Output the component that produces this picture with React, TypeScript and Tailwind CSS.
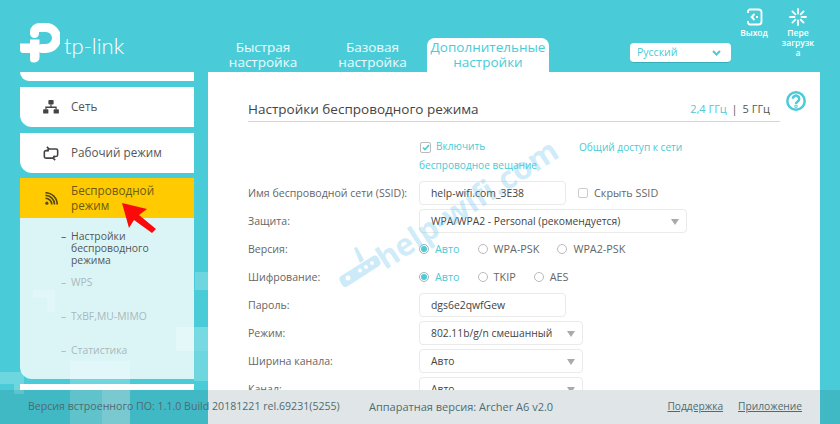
import React from 'react';

const font = { fontFamily: '"Open Sans", "Liberation Sans", sans-serif' };

function Logo() {
  return (
    <div className="flex items-center">
      <svg width="40" height="40" viewBox="0 0 40 40" fill="none">
        <path d="M0 20.5h10v-4h9.5v18a5 5 0 0 1-5 5h-1a3.500 3.500 0 0 1-3.500-3.500V30H3.500A3.500 3.500 0 0 1 0 26.500z" fill="#fff" />
        <path d="M14.500 10.500V9a4.500 4.500 0 0 1 4.500-4.500h7a10.500 10.500 0 0 1 0 21h-4" stroke="#fff" strokeWidth="9" strokeLinecap="round" />
      </svg>
      <span className="ml-[4px] mt-[6px] text-[22px] leading-none font-light text-white" style={{ fontFamily: '"Lato", sans-serif' }}>tp-link</span>
    </div>
  );
}

function ExitIcon() {
  return (
    <svg width="18" height="18" viewBox="0 0 18 18" fill="none" stroke="#fff" strokeWidth="1.800">
      <path d="M3 5V3.500A2 2 0 0 1 5 1.500h8.500a3 3 0 0 1 3 3v9a3 3 0 0 1-3 3H5a2 2 0 0 1-2-2V13" />
      <path d="M9.500 6 6.500 9l3 3M6.500 9h2M11 9h2" />
    </svg>
  );
}

function RebootIcon() {
  return (
    <svg width="18" height="18" viewBox="0 0 18 18" fill="none" stroke="#fff" strokeWidth="1.800" strokeLinecap="round">
      <path d="M9 1v4.500M9 12.500V17M1 9h4.500M12.500 9H17M3.400 3.400l3 3M11.600 11.600l3 3M14.600 3.400l-3 3M6.400 11.600l-3 3" />
    </svg>
  );
}

function NetworkIcon() {
  return (
    <svg width="16" height="14" viewBox="0 0 18 16" fill="#444">
      <rect x="6" y="0" width="6" height="5" rx="1" />
      <rect x="0" y="10.500" width="6" height="5" rx="1" />
      <rect x="12" y="10.500" width="6" height="5" rx="1" />
      <path d="M8.300 5h1.400v2.500H15.500V10.500h-1.400V9H3.900v1.500H2.500V7.500H8.300z" />
    </svg>
  );
}

function ModeIcon() {
  return (
    <svg width="16" height="15" viewBox="0 0 18 18" fill="none" stroke="#444" strokeWidth="1.900">
      <path d="M6 3.500h9a2 2 0 0 1 2 2v5a2 2 0 0 1-2 2h-3.500" />
      <path d="M12 14.500H3a2 2 0 0 1-2-2v-5a2 2 0 0 1 2-2h3.500" />
      <path d="m4 1 2.500 2.500L4 6M14 12l-2.500 2.500L14 17" strokeLinejoin="round" />
    </svg>
  );
}

function WifiIcon() {
  return (
    <svg width="13" height="13" viewBox="0 0 14 14" fill="none" stroke="#5a4a10" strokeWidth="1.800">
      <circle cx="2" cy="12" r="1.700" fill="#5a4a10" stroke="none" />
      <path d="M0.500 6.700a6.800 6.800 0 0 1 6.800 6.800" />
      <path d="M0.500 3.700a9.800 9.800 0 0 1 9.800 9.800" />
      <path d="M0.500 0.800a12.700 12.700 0 0 1 12.700 12.700" />
    </svg>
  );
}

function SideItem({ icon, children }: { icon: React.ReactNode; children: React.ReactNode }) {
  return (
    <div className="h-10 shrink-0 bg-white rounded-bl-xl flex items-center">
      <div className="w-[51px] pl-[11px] flex justify-center">{icon}</div>
      <span className="text-[11.700px] text-[#555]">{children}</span>
    </div>
  );
}

function SubItem({ active, className, children }: { active?: boolean; className: string; children: React.ReactNode }) {
  return (
    <div className={`flex leading-[12px] text-[10.400px] ${active ? 'text-[#555]' : 'text-[#aab8ba]'} ${className}`}>
      <span className="w-[10px] shrink-0 ml-[41px]">–</span>
      <span className="w-[100px]">{children}</span>
    </div>
  );
}

function Radio({ checked, label }: { checked?: boolean; label: string }) {
  return (
    <div className="flex items-center">
      <span className={`w-[10px] h-[10px] rounded-full border flex items-center justify-center ${checked ? 'border-[#9fb5b8]' : 'border-[#bbb]'}`}>
        {checked && <span className="w-[6px] h-[6px] rounded-full bg-[#4acbd6]" />}
      </span>
      <span className={`ml-[6px] pt-px ${checked ? 'text-[#4acbd6]' : 'text-[#666]'}`}>{label}</span>
    </div>
  );
}

function Row({ label, children }: { label: string; children: React.ReactNode }) {
  return (
    <div className="h-7 shrink-0 flex items-center">
      <span className="w-[171px] shrink-0 pt-px text-[10.600px] text-[#666]">{label}</span>
      {children}
    </div>
  );
}

function Input({ value }: { value: string }) {
  return (
    <div className="w-[147px] h-6 flex items-center pl-[11px] pt-px bg-white border border-[#eaeaea] rounded-[4px] text-[10.400px] text-[#444]">{value}</div>
  );
}

function Select({ value, width }: { value: string; width: string }) {
  return (
    <div className={`h-6 flex items-center justify-between pl-[11px] pr-[7px] pt-px bg-white border border-[#eaeaea] rounded-[4px] text-[10.300px] text-[#444] ${width}`}>
      <span>{value}</span>
      <span className="w-0 h-0 border-x-[4.500px] border-x-transparent border-t-[6px] border-t-[#aaa]" />
    </div>
  );
}

export default function App() {
  return (
    <div className="relative w-[840px] h-[424px] overflow-hidden bg-[#4accd8]" style={font}>
      {/* background squares */}
      <div className="absolute left-[195px] top-[272px] w-[13px] h-[18px] bg-white/20" />
      <div className="absolute left-[176px] top-[327px] w-[32px] h-[24px] bg-white/25" />
      <div className="absolute left-[194px] top-[351px] w-[14px] h-[30px] bg-white/20" />
      <div className="absolute left-[70px] top-[361px] w-[60px] h-[63px] bg-white/20" />
      <div className="absolute left-[102px] top-[390px] w-[28px] h-[34px] bg-white/20" />
      <div className="absolute left-[0px] top-[372px] w-[24px] h-[12px] bg-white/20" />
      <div className="absolute left-[14px] top-[384px] w-[10px] h-[10px] bg-white/20" />
      <div className="absolute left-[33px] top-[290px] w-[22px] h-[8px] bg-white/15" />
      <div className="absolute left-[47px] top-[298px] w-[8px] h-[14px] bg-white/15" />

      <div className="relative flex h-[72px]">
        <div className="w-[208px] pl-5 pt-[23px]">
          <Logo />
        </div>
        <div className="flex items-end text-[13.500px] leading-[15px] text-center text-white/90">
          <div className="w-[110px] pb-[2px]">Быстрая<br />настройка</div>
          <div className="w-[109px] pb-[2px]">Базовая<br />настройка</div>
          <div className="w-[122px] h-[34px] pt-[2px] bg-white rounded-t-lg text-[#4acbd6]">Дополнительные<br />настройки</div>
        </div>
        <div className="ml-[81px] mt-[43px] w-[101px] h-5 flex items-center justify-between pl-[7px] pr-[10px] bg-white rounded-[4px] border-b border-[#37aeb9] text-[10.500px] text-[#4acbd6]">
          <span>Русский</span>
          <svg width="9" height="6" viewBox="0 0 9 6" fill="none" stroke="#4acbd6" strokeWidth="2"><path d="m1 1 3.500 3.500L8 1" /></svg>
        </div>
        <div className="ml-[7px] mt-[8px] w-[32px] flex flex-col items-center text-[8.500px] leading-[10px] font-semibold text-white">
          <ExitIcon />
          <span className="mt-[2px]">Выход</span>
        </div>
        <div className="ml-[12px] mt-[8px] w-[32px] flex flex-col items-center text-[8.500px] leading-[10px] font-semibold text-center text-white">
          <RebootIcon />
          <span className="mt-[2px] whitespace-nowrap">Пере<br />загрузк<br />а</span>
        </div>
      </div>

      <div className="relative flex h-[352px]">
        <div className="ml-5 w-[174px] h-[318px] overflow-hidden flex flex-col">
          <div className="h-[9px] shrink-0 bg-white rounded-bl-xl" />
          <div className="h-[6px] shrink-0" />
          <SideItem icon={<NetworkIcon />}>Сеть</SideItem>
          <div className="h-[6px] shrink-0" />
          <SideItem icon={<ModeIcon />}>Рабочий режим</SideItem>
          <div className="h-[5px] shrink-0" />
          <div className="h-10 shrink-0 bg-[#ffcb00] flex items-center">
            <div className="w-[51px] pl-[11px] flex justify-center"><WifiIcon /></div>
            <span className="text-[11.700px] leading-[15px] text-[#6b5a14]">Беспроводной<br />режим</span>
          </div>
          <div className="h-[161px] shrink-0 bg-white/80 rounded-bl-xl pt-[12px]">
            <SubItem active className="h-[43px]">Настройки беспроводного режима</SubItem>
            <SubItem className="h-[34px] pt-[3px]">WPS</SubItem>
            <SubItem className="h-[34px] pt-[3px]">TxBF,MU-MIMO</SubItem>
            <SubItem className="h-[20px] pt-[3px]">Статистика</SubItem>
          </div>
          <div className="h-[5px] shrink-0" />
          <div className="h-[6px] shrink-0 bg-white" />
        </div>

        <div className="ml-[14px] w-[612px] h-full bg-white">
          <div className="relative h-[318px] overflow-hidden px-10">
            <div className="h-[50px] pr-[10px] flex items-end justify-between pb-[1px] border-b border-[#d5d5d5]">
              <span className="text-[13.500px] leading-[22px] text-[#444]">Настройки беспроводного режима</span>
              <span className="text-[11px] leading-[22px] text-[#4acbd6]">2,4 ГГц <span className="text-[#555] mx-[2px]">|</span> <span className="text-[#555]">5 ГГц</span></span>
            </div>
            <div className="text-[10.800px]">
              <div className="ml-[171px] h-[57px] pt-[16px] flex text-[10.100px] text-[#4acbd6]">
                <div className="w-[160px]">
                  <div className="flex items-center h-[18px]">
                    <span className="w-[11px] h-[11px] ml-[1px] mr-[5px] border border-[#bbb] rounded-[2px] flex items-center justify-center">
                      <svg width="8" height="7" viewBox="0 0 8 7" fill="none" stroke="#4acbd6" strokeWidth="1.600"><path d="m1 3.500 2 2L7 1" /></svg>
                    </span>
                    Включить
                  </div>
                  <div className="h-[18px] leading-[18px] whitespace-nowrap">беспроводное вещание</div>
                </div>
                <span className="h-[18px] leading-[18px] whitespace-nowrap">Общий доступ к сети</span>
              </div>
              <Row label="Имя беспроводной сети (SSID):">
                <Input value="help-wifi.com_3E38" />
                <span className="w-[10px] h-[10px] ml-[12px] mr-[6px] border border-[#ccc] rounded-[2px]" />
                <span className="pt-px text-[#666]">Скрыть SSID</span>
              </Row>
              <Row label="Защита:"><Select value="WPA/WPA2 - Personal (рекомендуется)" width="w-[268px]" /></Row>
              <Row label="Версия:">
                <div className="flex gap-[18px]">
                  <Radio checked label="Авто" />
                  <Radio label="WPA-PSK" />
                  <Radio label="WPA2-PSK" />
                </div>
              </Row>
              <Row label="Шифрование:">
                <div className="flex gap-[18px]">
                  <Radio checked label="Авто" />
                  <Radio label="TKIP" />
                  <Radio label="AES" />
                </div>
              </Row>
              <Row label="Пароль:"><Input value="dgs6e2qwfGew" /></Row>
              <Row label="Режим:"><Select value="802.11b/g/n смешанный" width="w-[164px]" /></Row>
              <Row label="Ширина канала:"><Select value="Авто" width="w-[164px]" /></Row>
              <Row label="Канал:"><Select value="Авто" width="w-[164px]" /></Row>
            </div>
          </div>
        </div>

        <svg className="ml-[-35px] mt-[18px]" width="22" height="22" viewBox="0 0 22 22" fill="none" stroke="#4acbd6" strokeWidth="2.500">
          <circle cx="11" cy="11" r="8.700" />
          <path d="M7.800 8.800a3.200 3.200 0 1 1 4.800 2.800c-1 .6-1.600 1-1.600 2.400" />
          <circle cx="11" cy="16.300" r="0.500" />
        </svg>
      </div>

      {/* watermark */}
      <div className="absolute left-[362px] top-[188px] text-[31px] leading-none font-bold text-[#58bdea]/30 -rotate-[33deg] whitespace-nowrap">help-wifi.com</div>
      <svg className="absolute left-[338px] top-[245px] opacity-30" width="44" height="44" viewBox="0 0 44 44" fill="#58bdea">
        <path d="M3 31 35 11a4 4 0 0 1 5 1l2 4a4 4 0 0 1-1 5L10 41a4 4 0 0 1-6-1l-2-4a4 4 0 0 1 1-5z" />
        <path d="M22 18 16 3l3-1 7 13z" />
        <circle cx="10" cy="33" r="2.500" fill="#fff" />
        <circle cx="22" cy="25.500" r="2" fill="#fff" />
        <circle cx="28" cy="22" r="2" fill="#fff" />
        <circle cx="34" cy="18" r="2" fill="#fff" />
      </svg>

      {/* red arrow */}
      <svg className="absolute left-[115px] top-[198px]" width="48" height="40" viewBox="0 0 48 40" fill="#fb0a0a">
        <path d="M7 5 32 11 24 17 41 31 37 35 19 22 14 30z" />
      </svg>

      {/* footer overlay */}
      <div className="absolute left-0 bottom-0 w-full h-[34px] flex items-center bg-[#003242]/12 text-[#4f6b70]">
        <span className="ml-7 w-[341px] text-[10.600px] whitespace-nowrap">Версия встроенного ПО: 1.1.0 Build 20181221 rel.69231(5255)</span>
        <span className="text-[11px] whitespace-nowrap">Аппаратная версия: Archer A6 v2.0</span>
        <span className="ml-auto text-[10.200px] underline whitespace-nowrap">Поддержка</span>
        <span className="ml-[15px] mr-[38px] text-[10.200px] underline whitespace-nowrap">Приложение</span>
      </div>
    </div>
  );
}
